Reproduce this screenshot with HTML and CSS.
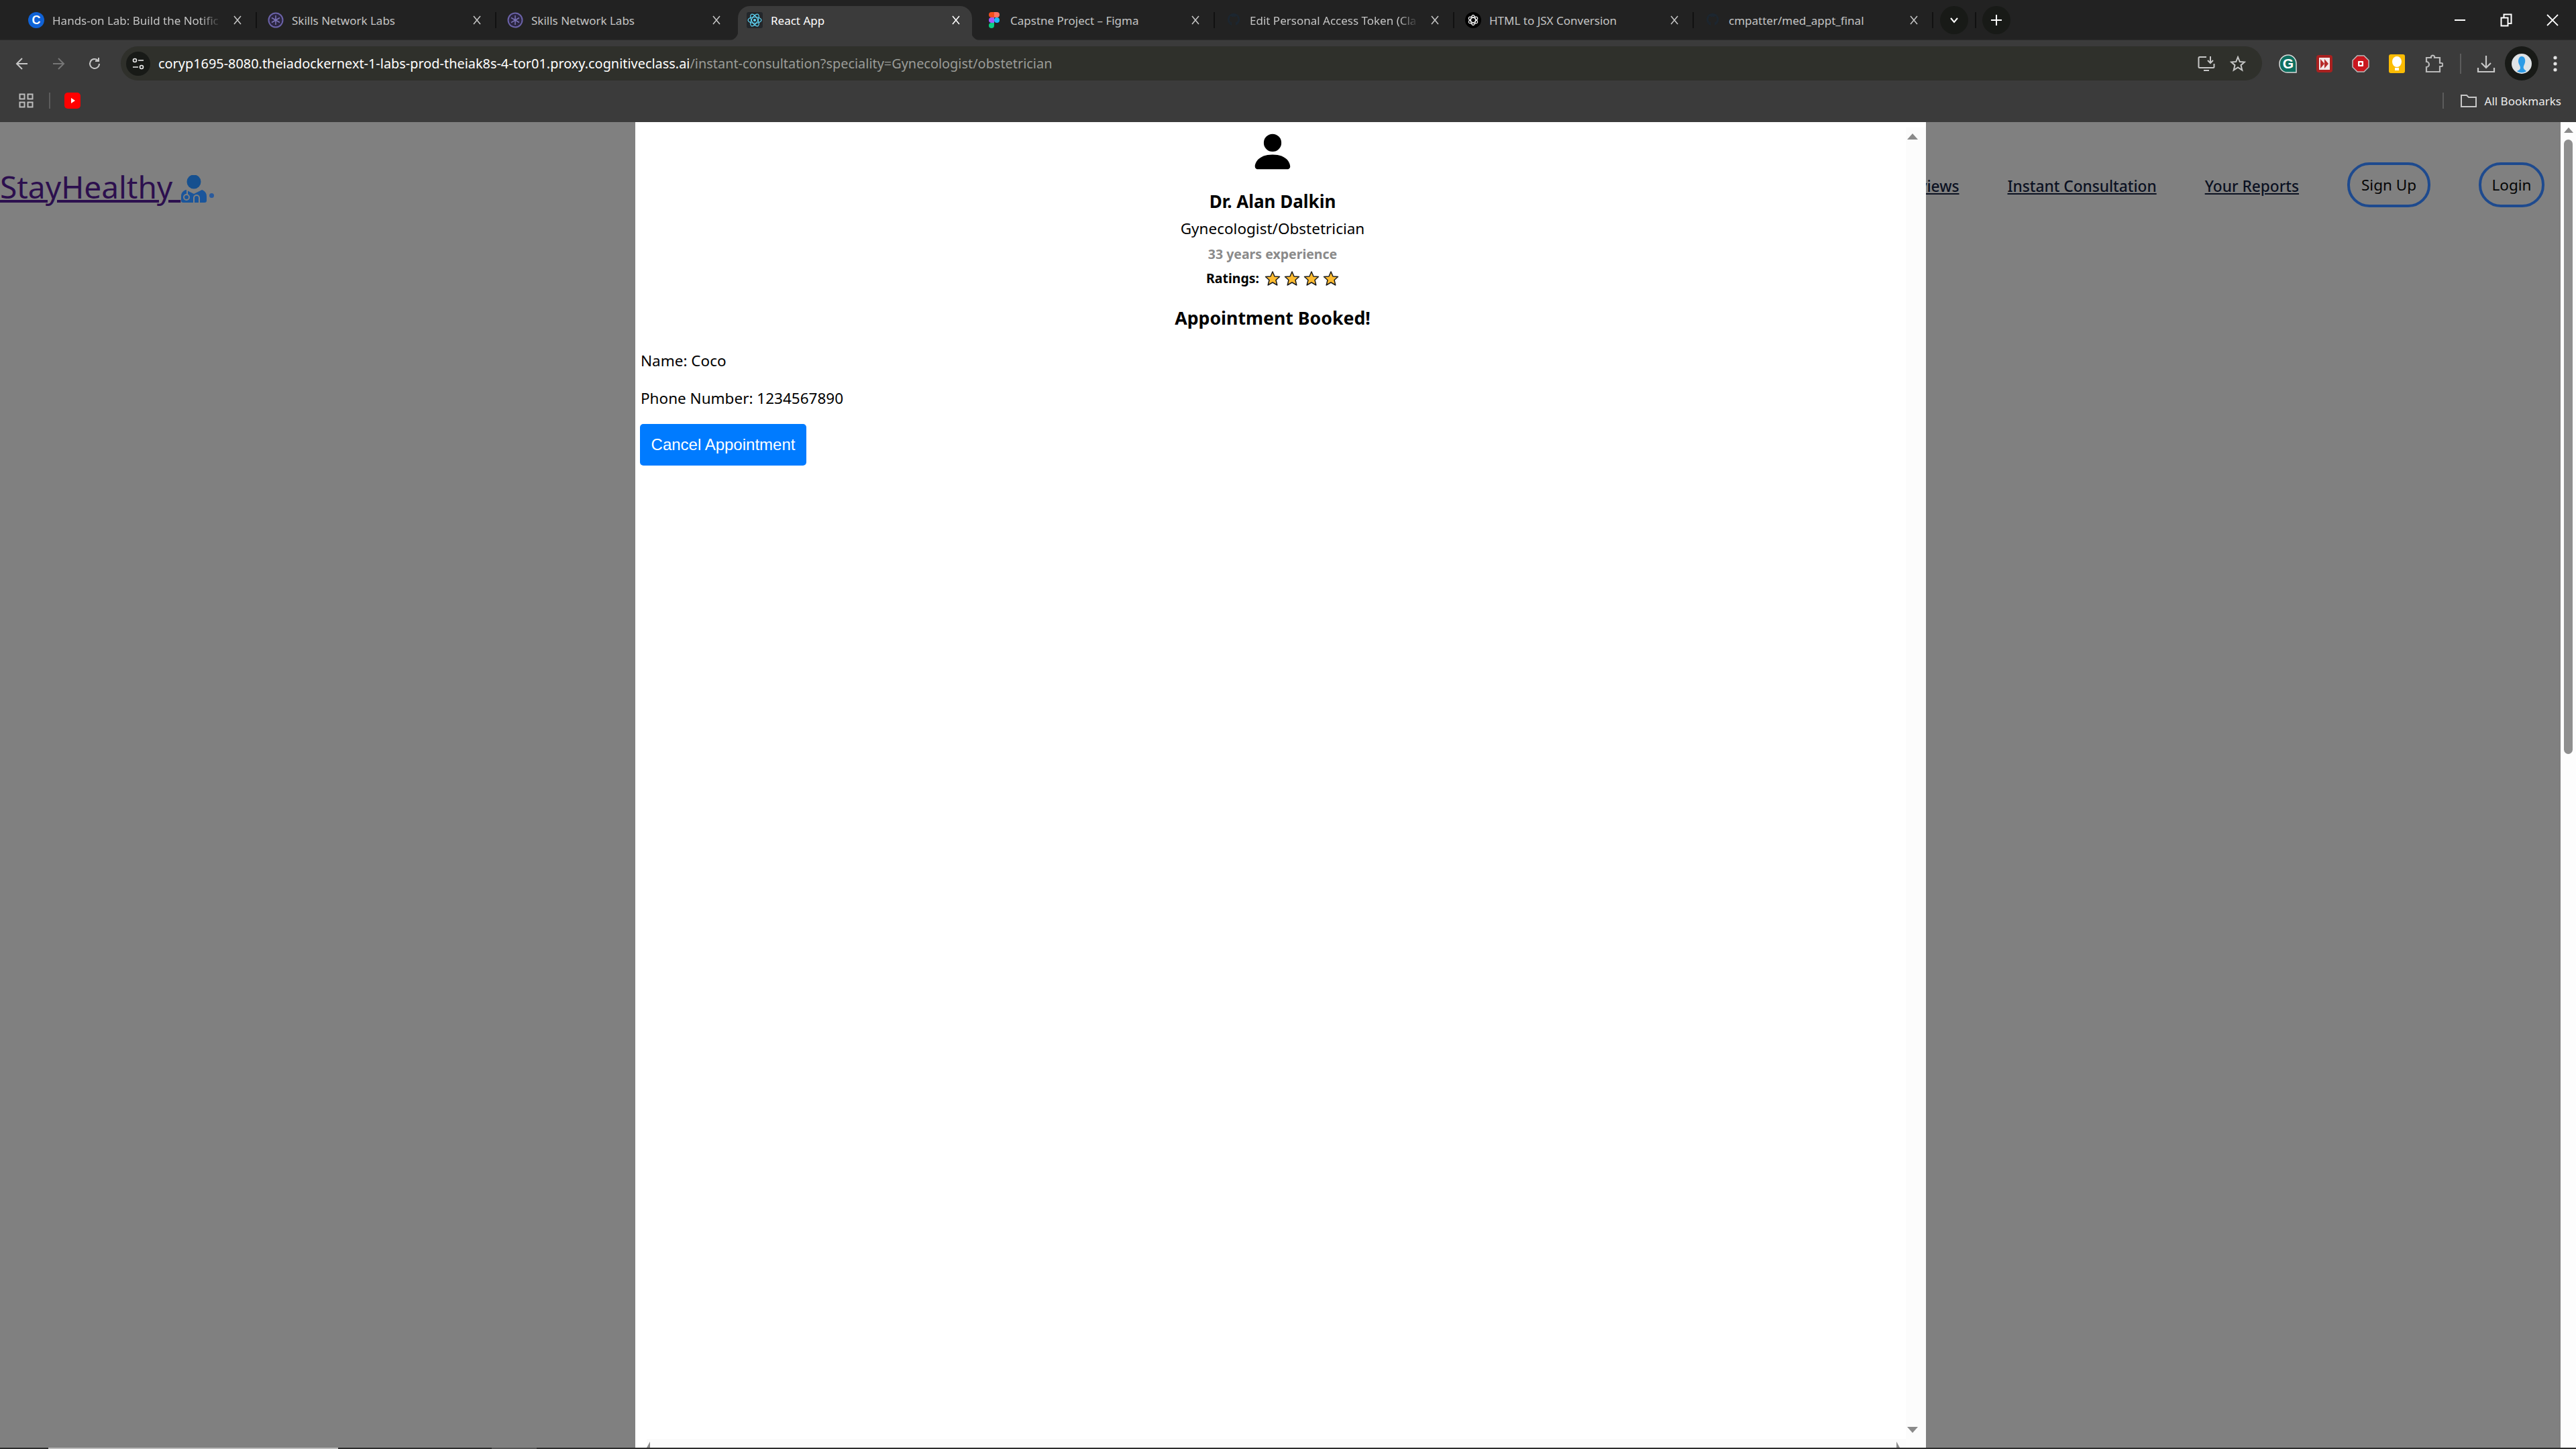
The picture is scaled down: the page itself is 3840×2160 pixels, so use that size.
FILE: index.html
```html
<!DOCTYPE html>
<html lang="en">
<head>
    <meta charset="UTF-8">
    <link rel="stylesheet" href="styles.css">
    <title>React App</title>
</head>
<body>
    <svg class="defs" width="0" height="0">
        <symbol id="x" viewBox="0 0 12 14"><path d="M1 1l10 12M11 1L1 13" fill="none" stroke="currentColor" stroke-width="1.6"/></symbol>
        <symbol id="skills" viewBox="0 0 24 24"><circle cx="12" cy="12" r="10.5" fill="#2b2540" stroke="#6b62a8" stroke-width="2"/><path d="M12 5v14M6 8.5l12 7M18 8.5l-12 7" stroke="#7c74b8" stroke-width="1.5"/></symbol>
        <symbol id="github" viewBox="0 0 24 24"><path d="M12 2C6.500 2 3 6 3 11c0 4 2.500 7.500 6 9v-3c-2 .5-3-.5-3.500-2 .5 0 1.500.5 2 1.500.8 1 1.500.8 1.500.5 0-.7.300-1.200.7-1.500C7 15 5.500 13.500 5.500 11c0-1 .4-2 1-2.700-.1-.8 0-1.800.3-2.300 1 0 2 .6 2.700 1.200a9 9 0 0 1 5 0C15.200 6.600 16.200 6 17.200 6c.3.5.4 1.500.3 2.300.6.7 1 1.700 1 2.700 0 2.500-1.500 4-4.200 4.500.4.300.7 1 .7 1.700V20c3.500-1.500 6-5 6-9 0-5-3.500-9-9-9z" fill="#1c2630"/></symbol>
        <symbol id="star" viewBox="0 0 24 24"><polygon points="12,2 15,9 22.500,9.500 17,14.500 18.800,22 12,18 5.200,22 7,14.500 1.500,9.500 9,9" fill="#fdbb30" stroke="#1d1d1d" stroke-width="1.500" stroke-linejoin="round"/></symbol>
    </svg>

    <header class="tabstrip">
        <div class="tab sep">
            <svg class="favicon" viewBox="0 0 24 24"><circle cx="12" cy="12" r="12" fill="#0f62d6"/><text x="12" y="18" text-anchor="middle" class="fav-c">C</text></svg>
            <span class="tab-title fade">Hands-on Lab: Build the Notific</span>
            <svg class="tab-close"><use href="#x"/></svg>
        </div>
        <div class="tab sep">
            <svg class="favicon"><use href="#skills"/></svg>
            <span class="tab-title">Skills Network Labs</span>
            <svg class="tab-close"><use href="#x"/></svg>
        </div>
        <div class="tab">
            <svg class="favicon"><use href="#skills"/></svg>
            <span class="tab-title">Skills Network Labs</span>
            <svg class="tab-close"><use href="#x"/></svg>
        </div>
        <div class="tab active">
            <svg class="favicon" viewBox="0 0 24 24"><rect width="24" height="24" rx="3" fill="#23272b"/><g fill="none" stroke="#61dafb" stroke-width="1.200"><ellipse cx="12" cy="12" rx="10" ry="4.500"/><ellipse cx="12" cy="12" rx="10" ry="4.500" transform="rotate(60 12 12)"/><ellipse cx="12" cy="12" rx="10" ry="4.500" transform="rotate(120 12 12)"/></g><circle cx="12" cy="12" r="2" fill="#61dafb"/></svg>
            <span class="tab-title">React App</span>
            <svg class="tab-close"><use href="#x"/></svg>
        </div>
        <div class="tab sep">
            <svg class="favicon" viewBox="0 0 24 24"><path d="M8 0h4v8H8a4 4 0 0 1 0-8z" fill="#f24e1e"/><path d="M12 0h4a4 4 0 0 1 0 8h-4z" fill="#ff7262"/><path d="M8 8h4v8H8a4 4 0 0 1 0-8z" fill="#a259ff"/><circle cx="16" cy="12" r="4" fill="#1abcfe"/><path d="M8 16h4v4a4 4 0 1 1-4-4z" fill="#0acf83"/></svg>
            <span class="tab-title">Capstne Project – Figma</span>
            <svg class="tab-close"><use href="#x"/></svg>
        </div>
        <div class="tab sep">
            <svg class="favicon"><use href="#github"/></svg>
            <span class="tab-title fade">Edit Personal Access Token (Cla</span>
            <svg class="tab-close"><use href="#x"/></svg>
        </div>
        <div class="tab sep">
            <svg class="favicon" viewBox="0 0 24 24"><circle cx="12" cy="12" r="12" fill="#000"/><g fill="none" stroke="#eee" stroke-width="1.300"><ellipse cx="12" cy="12" rx="7.500" ry="3.500" transform="rotate(30 12 12)"/><ellipse cx="12" cy="12" rx="7.500" ry="3.500" transform="rotate(90 12 12)"/><ellipse cx="12" cy="12" rx="7.500" ry="3.500" transform="rotate(150 12 12)"/></g></svg>
            <span class="tab-title">HTML to JSX Conversion</span>
            <svg class="tab-close"><use href="#x"/></svg>
        </div>
        <div class="tab sep">
            <svg class="favicon"><use href="#github"/></svg>
            <span class="tab-title">cmpatter/med_appt_final</span>
            <svg class="tab-close"><use href="#x"/></svg>
        </div>
        <div class="strip-pill first">
            <svg width="14" height="10" viewBox="0 0 14 10"><path d="M2 2l5 6 5-6" fill="none" stroke="#fff" stroke-width="2"/></svg>
        </div>
        <div class="strip-divider"></div>
        <div class="strip-pill">
            <svg width="18" height="18" viewBox="0 0 18 18"><path d="M9 1v16M1 9h16" stroke="#fff" stroke-width="2"/></svg>
        </div>
        <div class="window-controls">
            <div class="win-btn"><svg width="18" height="4" viewBox="0 0 18 4"><path d="M1 2h16" stroke="#fff" stroke-width="2"/></svg></div>
            <div class="win-btn"><svg width="18" height="20" viewBox="0 0 18 20"><path d="M1.500 6.500h10v12h-10zM5.500 6V1.500h11V15h-4.500" fill="none" stroke="#fff" stroke-width="2"/></svg></div>
            <div class="win-btn"><svg width="18" height="18" viewBox="0 0 18 18"><path d="M1 1l16 16M17 1L1 17" stroke="#fff" stroke-width="1.800"/></svg></div>
        </div>
    </header>

    <div class="toolbar">
        <div class="nav-btn"><svg width="20" height="20" viewBox="0 0 20 20"><path d="M18 10H3M10 2l-8 8 8 8" fill="none" stroke="#c7c7c7" stroke-width="2"/></svg></div>
        <div class="nav-btn"><svg width="20" height="20" viewBox="0 0 20 20"><path d="M2 10h15M10 2l8 8-8 8" fill="none" stroke="#767676" stroke-width="2"/></svg></div>
        <div class="nav-btn"><svg width="20" height="20" viewBox="0 0 20 20"><path d="M17 10a7 7 0 1 1-2.300-5.200M16 1v5h-5" fill="none" stroke="#c7c7c7" stroke-width="2"/></svg></div>
        <div class="urlbar">
            <div class="tune"><svg width="20" height="18" viewBox="0 0 20 18"><circle cx="5" cy="4" r="2.500" fill="none" stroke="#eee" stroke-width="1.600"/><path d="M10 4h8M2 14h8" stroke="#eee" stroke-width="1.600"/><circle cx="15" cy="14" r="2.500" fill="none" stroke="#eee" stroke-width="1.600"/></svg></div>
            <span class="url"><span class="url-host">coryp1695-8080.theiadockernext-1-labs-prod-theiak8s-4-tor01.proxy.cognitiveclass.ai</span>/instant-consultation?speciality=Gynecologist/obstetrician</span>
            <div class="url-actions">
                <svg width="26" height="24" viewBox="0 0 26 24"><path d="M13 2H3a1.500 1.500 0 0 0-1.500 1.500v13A1.500 1.500 0 0 0 3 18h20a1.500 1.500 0 0 0 1.500-1.500V12M9 22h8" fill="none" stroke="#c7c7c7" stroke-width="2"/><path d="M19 1v10M15 7l4 4 4-4" fill="none" stroke="#c7c7c7" stroke-width="2"/></svg>
                <svg width="24" height="24" viewBox="0 0 24 24"><polygon points="12,2 14.800,9 22,9.500 16.500,14.200 18.300,21.500 12,17.500 5.700,21.500 7.500,14.200 2,9.500 9.200,9" fill="none" stroke="#c7c7c7" stroke-width="2"/></svg>
            </div>
        </div>
        <div class="extensions">
            <svg class="ext" viewBox="0 0 30 30"><path d="M15 2a12 13 0 0 1 12 13v13H14C6 28 2 22 2 15A13 13 0 0 1 15 2z" fill="#0e6f60" stroke="#dcdcdc" stroke-width="1.500"/><text x="15" y="22" text-anchor="middle" class="ext-g">G</text></svg>
            <svg class="ext" viewBox="0 0 30 30"><rect x="3" y="2" width="24" height="26" rx="4" fill="#a8201f"/><rect x="7" y="6" width="16" height="18" fill="#f3e8e8"/><path d="M9 8l6 7-6 7zM15 8l6 7-6 7z" fill="#b72b2a"/></svg>
            <svg class="ext" viewBox="0 0 30 30"><polygon points="10,3 20,3 27,10 27,20 20,27 10,27 3,20 3,10" fill="#c9171e" stroke="#bbb" stroke-width="1.500"/><rect x="11" y="11" width="8" height="8" rx="1" fill="#fff"/><circle cx="15" cy="15" r="2" fill="#c9171e"/></svg>
            <svg class="ext" viewBox="0 0 30 30"><rect x="3" y="1" width="24" height="28" rx="3" fill="#fbbc04"/><ellipse cx="15" cy="12" rx="7" ry="8" fill="#fff"/><rect x="12" y="21" width="6" height="4" fill="#fff"/></svg>
            <svg class="ext" viewBox="0 0 30 30"><path d="M5 6h7V4a3 3 0 0 1 5 0v2h8v8h2a2.500 2.500 0 0 1 0 5h-2v8H5v-7a4 4 0 0 0 0-8z" fill="none" stroke="#b9b9b9" stroke-width="2.200"/></svg>
            <div class="tool-divider"></div>
            <svg class="ext download" viewBox="0 0 30 30"><path d="M15 3v17M8 14l7 7 7-7M3 21v6h24v-6" fill="none" stroke="#c7c7c7" stroke-width="2.200"/></svg>
            <div class="profile">
                <svg width="30" height="30" viewBox="0 0 30 30"><circle cx="15" cy="15" r="15" fill="#dfe3e6"/><path d="M15 4c4 0 6 4 5 9-1 4-3 6-2 9 1 2 3 3 4 4-4 3-10 3-14 0 2-1 5-2 5-5 0-3-3-6-3-9 0-5 2-8 5-8z" fill="#2c9be6"/></svg>
            </div>
            <svg class="dots" width="8" height="26" viewBox="0 0 8 26"><circle cx="4" cy="4" r="2.600" fill="#e2e2e2"/><circle cx="4" cy="13" r="2.600" fill="#e2e2e2"/><circle cx="4" cy="22" r="2.600" fill="#e2e2e2"/></svg>
        </div>
    </div>

    <div class="bookmarks">
        <svg class="apps" width="24" height="24" viewBox="0 0 24 24"><path d="M2.500 2.500h7v7h-7zM14.500 2.500h7v7h-7zM2.500 14.500h7v7h-7zM14.500 14.500h7v7h-7z" fill="none" stroke="#bdbdbd" stroke-width="2"/></svg>
        <div class="bm-divider"></div>
        <svg class="yt" width="24" height="24" viewBox="0 0 24 24"><rect width="24" height="24" rx="5" fill="#f00"/><path d="M10 8l6 4-6 4z" fill="#fff"/></svg>
        <div class="all-bookmarks">
            <div class="bm-divider"></div>
            <svg class="folder" width="26" height="22" viewBox="0 0 26 22"><path d="M2 3h8l3 3h11v14H2z" fill="none" stroke="#c7c7c7" stroke-width="2"/></svg>
            <span class="bm-label">All Bookmarks</span>
        </div>
    </div>

    <div class="page">
        <div class="site">
            <div class="navbar">
                <a class="logo" href="#">StayHealthy <svg class="logo-icon" width="40" height="42" viewBox="0 0 40 42"><circle cx="20" cy="10" r="10.500" fill="#16508f"/><path d="M8 22c-5 2-7 5-7 10v6a3 3 0 0 0 3 3h32a3 3 0 0 0 3-3v-6c0-5-2-8-7-10l-12 6z" fill="#1a559b"/><circle cx="9" cy="33" r="4" fill="none" stroke="#808080" stroke-width="2"/><path d="M10 23v6M28 41v-7a4 4 0 0 0-8 0v7" fill="none" stroke="#808080" stroke-width="2"/></svg></a>
                <span class="logo-dot"></span>
                <nav class="links">
                    <a href="#">Reviews</a>
                    <a href="#">Instant Consultation</a>
                    <a href="#">Your Reports</a>
                    <button class="pill signup">Sign Up</button>
                    <button class="pill login">Login</button>
                </nav>
            </div>

            <div class="modal">
                <div class="modal-main">
                    <div class="doctor">
                        <svg class="avatar" width="70" height="70" viewBox="0 0 16 16"><path d="M3 14s-1 0-1-1 1-4 6-4 6 3 6 4-1 1-1 1H3zm5-6a3 3 0 1 0 0-6 3 3 0 0 0 0 6z"/></svg>
                        <div class="doctor-name">Dr. Alan Dalkin</div>
                        <div class="doctor-speciality">Gynecologist/Obstetrician</div>
                        <div class="doctor-exp">33 years experience</div>
                        <div class="doctor-ratings">Ratings:
                            <svg class="rate-star"><use href="#star"/></svg>
                            <svg class="rate-star"><use href="#star"/></svg>
                            <svg class="rate-star"><use href="#star"/></svg>
                            <svg class="rate-star"><use href="#star"/></svg>
                        </div>
                        <h3 class="booked">Appointment Booked!</h3>
                    </div>
                    <p class="detail first">Name: Coco</p>
                    <p class="detail">Phone Number: 1234567890</p>
                    <button class="cancel">Cancel Appointment</button>
                </div>
                <div class="modal-vscroll">
                    <span class="arrow-up"></span>
                    <span class="arrow-down"></span>
                </div>
                <div class="modal-hscroll">
                    <span class="arrow-left"></span>
                    <span class="arrow-right"></span>
                </div>
            </div>
        </div>
        <div class="page-scroll">
            <span class="arrow-up"></span>
            <div class="thumb"></div>
        </div>
    </div>
    <div class="taskbar"><div class="task-a"></div><div class="task-b"></div></div>
</body>
</html>
```

FILE: styles.css
```css
* {
    box-sizing: border-box;
}

html, body {
    margin: 0;
    height: 2160px;
    overflow: hidden;
}

body {
    display: flex;
    flex-direction: column;
    width: 3840px;
    background: #808080;
    font-family: "Noto Sans", "Open Sans", sans-serif;
}

.defs {
    position: absolute;
}

/* ---- tabs ---- */
.tabstrip {
    display: flex;
    align-items: flex-start;
    height: 60px;
    padding: 9px 0 0 25px;
    background: #222222;
    border-bottom: 1px solid #2c2c2c;
}

.tab {
    position: relative;
    display: flex;
    align-items: center;
    width: 357px;
    height: 51px;
    padding: 0 0 9px 17px;
    color: #c4c4c4;
    font-size: 17px;
}

.tab.sep::after {
    content: "";
    position: absolute;
    right: -1px;
    top: 9px;
    width: 2px;
    height: 24px;
    background: #111111;
}

.tab.active {
    z-index: 0;
    color: #ffffff;
}

.tab.active::before {
    content: "";
    position: absolute;
    z-index: -1;
    top: 0;
    bottom: 0;
    left: 4px;
    right: 4px;
    background: #3b3b3b;
    border-radius: 18px 18px 0 0;
}

/* the flare at the foot of the active tab */
.tab.active::after {
    content: "";
    position: absolute;
    z-index: -1;
    bottom: 0;
    left: -10px;
    right: -9px;
    height: 14px;
    background:
        radial-gradient(circle at 0 0, transparent 14px, #3b3b3b 15px) left top / 50% 100% no-repeat,
        radial-gradient(circle at 100% 0, transparent 14px, #3b3b3b 15px) right top / 50% 100% no-repeat;
}

.favicon {
    flex: none;
    width: 24px;
    height: 24px;
    margin-right: 12px;
}

.fav-c {
    font: bold 18px "Liberation Sans", sans-serif;
    fill: #ffffff;
}

.tab-title {
    flex: none;
    width: 252px;
    white-space: nowrap;
    overflow: hidden;
}

.tab-title.fade {
    -webkit-mask-image: linear-gradient(to right, #000 88%, transparent);
    mask-image: linear-gradient(to right, #000 88%, transparent);
}

.tab-close {
    flex: none;
    width: 12px;
    height: 14px;
    margin-left: 18px;
}

.strip-pill {
    display: flex;
    align-items: center;
    justify-content: center;
    width: 42px;
    height: 42px;
    margin-left: 9px;
    background: #181a17;
    border-radius: 21px;
}

.strip-pill.first {
    margin-left: 11px;
}

.strip-divider {
    width: 2px;
    height: 24px;
    margin: 9px 0 0 10px;
    background: #111111;
}

.window-controls {
    display: flex;
    margin: -9px 1px 0 auto;
}

.win-btn {
    display: flex;
    align-items: center;
    justify-content: center;
    width: 69px;
    height: 60px;
}

/* ---- toolbar ---- */
.toolbar {
    display: flex;
    align-items: center;
    height: 60px;
    padding: 9px 0 0 15px;
    background: #3b3b3b;
}

.nav-btn {
    display: flex;
    align-items: center;
    justify-content: center;
    width: 36px;
    margin-right: 18px;
}

.nav-btn:nth-child(3) {
    margin-right: 21px;
}

.urlbar {
    display: flex;
    align-items: center;
    width: 3192px;
    height: 51px;
    padding: 0 18px 0 8px;
    background: #2f302b;
    border-radius: 26px;
}

.tune {
    display: flex;
    align-items: center;
    justify-content: center;
    width: 36px;
    height: 36px;
    margin-right: 12px;
    background: #181a17;
    border-radius: 50%;
}

.url {
    font-size: 19.900px;
    color: #9a9c98;
    white-space: nowrap;
}

.url-host {
    color: #ffffff;
}

.url-actions {
    display: flex;
    align-items: center;
    gap: 22px;
    margin-left: auto;
    padding-right: 6px;
}

.extensions {
    display: flex;
    align-items: center;
    margin-left: 24px;
}

.ext {
    width: 30px;
    height: 30px;
    margin-right: 24px;
}

.ext-g {
    font: bold 21px "Liberation Sans", sans-serif;
    fill: #ffffff;
}

.ext:nth-child(5) {
    margin-right: 25px;
}

.tool-divider {
    width: 2px;
    height: 30px;
    margin-right: 22px;
    background: #5c5c5c;
}

.ext.download {
    margin-right: 13px;
}

.profile {
    display: flex;
    align-items: center;
    justify-content: center;
    width: 50px;
    height: 51px;
    margin-right: 21px;
    background: #181a17;
    border-radius: 50%;
}

/* ---- bookmarks ---- */
.bookmarks {
    display: flex;
    align-items: center;
    height: 62px;
    padding: 0 22px 2px 27px;
    background: #3b3b3b;
}

.bm-divider {
    width: 2px;
    height: 24px;
    background: #5c5c5c;
}

.apps {
    margin-right: 22px;
}

.yt {
    margin-left: 21px;
}

.all-bookmarks {
    display: flex;
    align-items: center;
    margin-left: auto;
}

.folder {
    margin: 0 11px 0 24px;
}

.bm-label {
    font-size: 17px;
    color: #ededed;
}

/* ---- page behind the modal ---- */
.page {
    display: flex;
    height: 1976px;
}

.site {
    position: relative;
    width: 3817px;
    background: #808080;
}

.navbar {
    display: flex;
    align-items: flex-start;
    padding: 60px 24px 0 0;
}

.logo {
    display: flex;
    align-items: flex-end;
    margin-top: 5px;
    font-size: 46px;
    line-height: 62px;
    color: #2c0f4e;
    white-space: pre;
    text-decoration-thickness: 4px;
}

.logo-icon {
    margin-bottom: 6px;
}

.logo-dot {
    width: 7px;
    height: 7px;
    margin: 46px 0 0 3px;
    background: #2a5a9c;
    border-radius: 50%;
}

.links {
    display: flex;
    align-items: center;
    gap: 72px;
    margin-left: auto;
    font-size: 22.700px;
    font-weight: 500;
}

.links a {
    padding-top: 4px;
    color: #0b1122;
}

.pill {
    height: 67px;
    padding: 0;
    background: transparent;
    border: 4px solid #1e4a8e;
    border-radius: 33px;
    font-family: inherit;
    font-size: 22.500px;
    color: #050505;
}

.signup {
    width: 124px;
}

.login {
    width: 98px;
}

/* ---- modal ---- */
.modal {
    position: absolute;
    top: 0;
    bottom: 0;
    left: 947px;
    width: 1924px;
    display: grid;
    grid-template-columns: 1fr 30px;
    grid-template-rows: 1fr 13px;
    background: #ffffff;
}

.modal-main {
    padding: 0 2px 0 8px;
}

.doctor {
    display: flex;
    flex-direction: column;
    align-items: center;
    padding-top: 9px;
}

.avatar {
    display: block;
}

.doctor-name {
    margin-top: 21px;
    font-size: 26px;
    line-height: 36px;
    font-weight: 700;
}

.doctor-speciality {
    margin-top: 8px;
    font-size: 22.500px;
    line-height: 30px;
}

.doctor-exp {
    margin-top: 9px;
    font-size: 19.500px;
    line-height: 28px;
    font-weight: 700;
    color: #8a8a8a;
}

.doctor-ratings {
    display: flex;
    align-items: center;
    margin-top: 8px;
    font-size: 19.500px;
    line-height: 28px;
    font-weight: 700;
}

.rate-star {
    width: 24px;
    height: 24px;
    margin-left: 5px;
}

.rate-star:first-of-type {
    margin-left: 8px;
}

.booked {
    margin: 26px 0 0;
    font-size: 26.700px;
    line-height: 38px;
    font-weight: 700;
}

.detail {
    margin: 26px 0 0;
    font-size: 22.500px;
    line-height: 30px;
}

.detail.first {
    margin-top: 30px;
}

.cancel {
    display: block;
    width: 248px;
    height: 62px;
    margin: 23px 0 0 -1px;
    padding: 0;
    background: #007bff;
    border: 0;
    border-radius: 5px;
    color: #ffffff;
    font-family: "Liberation Sans", Arial, sans-serif;
    font-size: 24px;
}

.modal-vscroll {
    grid-row: 1 / 3;
    grid-column: 2;
    display: flex;
    flex-direction: column;
    justify-content: space-between;
    align-items: flex-start;
    margin-top: 8px;
    padding: 9px 0 22px 2px;
    background: #fcfcfc;
}

.modal-hscroll {
    grid-row: 2;
    grid-column: 1;
    display: flex;
    justify-content: space-between;
    margin-left: 17px;
    padding: 4px 9px 0 0;
    background: #fbfbfb;
    overflow: hidden;
}

.arrow-up {
    border: 8px solid transparent;
    border-top: 0;
    border-bottom: 9px solid #8a8a8a;
}

.arrow-down {
    border: 8px solid transparent;
    border-bottom: 0;
    border-top: 9px solid #8a8a8a;
}

.arrow-left {
    width: 0;
    height: 0;
    border: 9px solid transparent;
    border-left: 0;
    border-right: 5px solid #8a8a8a;
}

.arrow-right {
    width: 0;
    height: 0;
    border: 9px solid transparent;
    border-right: 0;
    border-left: 5px solid #8a8a8a;
}

/* ---- window scrollbar ---- */
.page-scroll {
    display: flex;
    flex-direction: column;
    width: 23px;
    padding: 8px 5px 0;
    background: #fdfdfd;
}

.page-scroll .arrow-up {
    align-self: center;
    border-width: 0 7px 8px;
}

.thumb {
    width: 13px;
    height: 916px;
    margin-top: 10px;
    background: #8f8f8f;
    border-radius: 7px;
}

/* ---- edge of the taskbar under the window ---- */
.taskbar {
    display: flex;
    height: 2px;
    background: #2c2c2c;
}

.task-a {
    width: 432px;
    margin-left: 72px;
    background: #bbbbbb;
}

.task-b {
    width: 67px;
    margin-left: 229px;
    background: #555555;
}
```
